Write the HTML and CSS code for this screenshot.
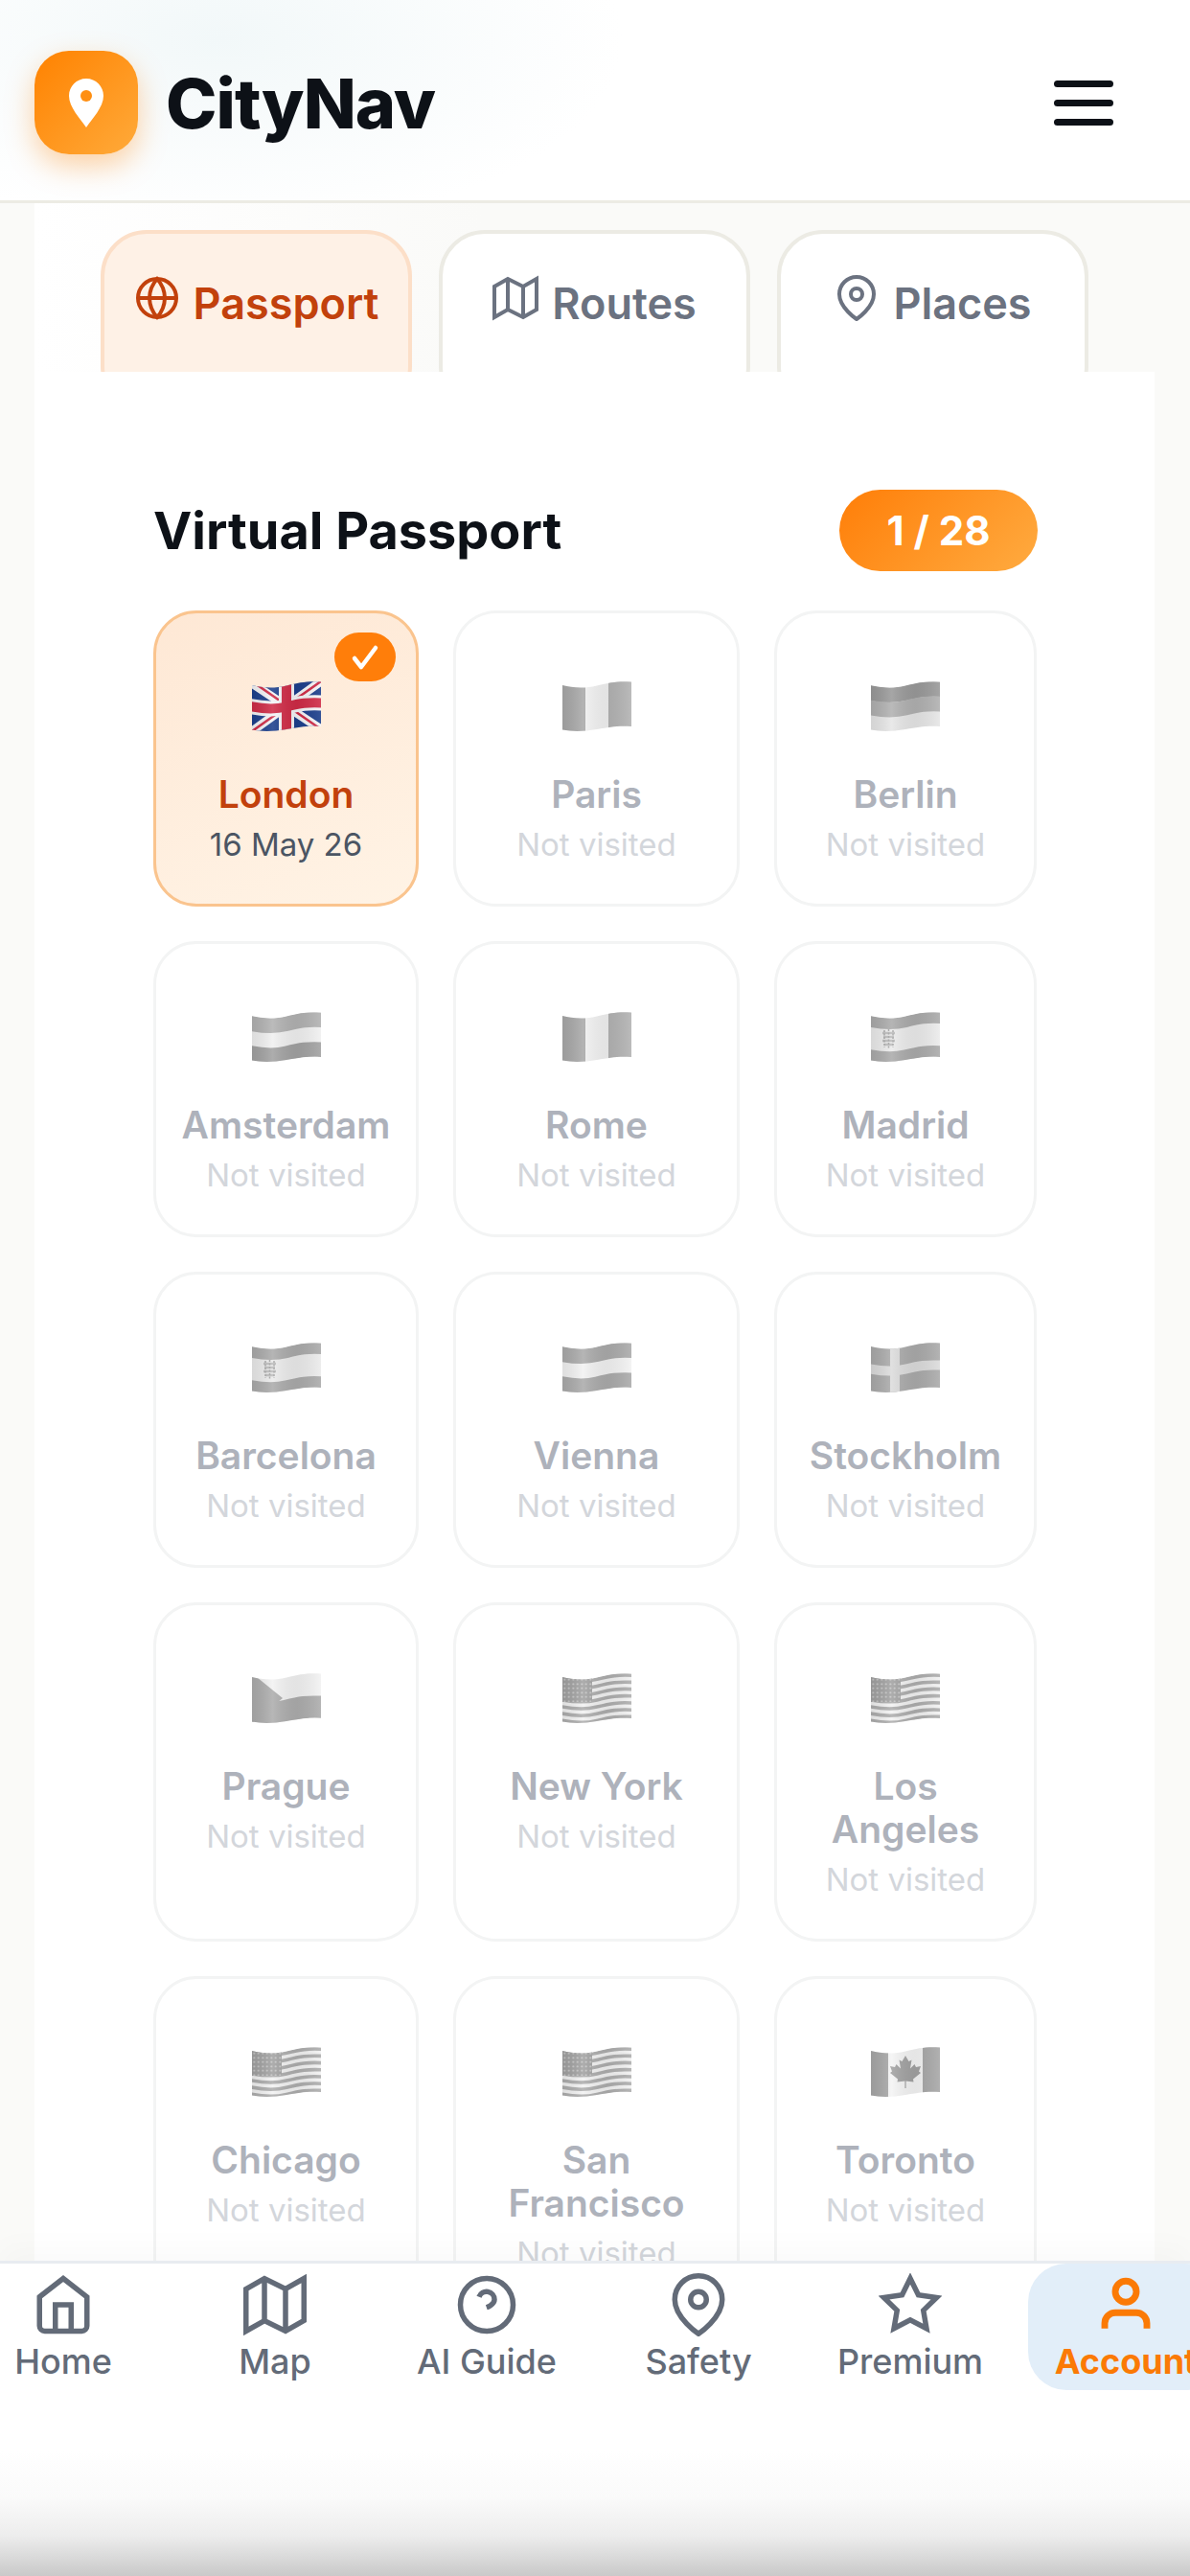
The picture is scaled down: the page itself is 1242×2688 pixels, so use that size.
FILE: index.html
```html
<!DOCTYPE html>
<html lang="en">

<head>
    <meta charset="UTF-8">
    <meta name="viewport" content="width=device-width, initial-scale=1.0">
    <title>CityNav - Virtual Passport</title>
    <link rel="stylesheet" href="styles.css">
</head>

<body>
    <!-- flags, all 72x52 with the same wavy outline -->
    <svg class="sprites" width="0" height="0" aria-hidden="true">
        <defs>
            <clipPath id="flag-shape">
                <path d="M0 4C10 6.500 22 8 36 4.500S58-.5 72 .5V47C58 46 50 47.500 36 50S10 52.500 0 50.500Z" />
            </clipPath>
            <path id="wave" fill="none" d="M-2 4C10 6.500 22 8 36 4.500S58-.5 74 .5" />
            <linearGradient id="fold" x1="0" x2="1" y1="0" y2="0">
                <stop offset="0" stop-color="#000" stop-opacity=".08" />
                <stop offset=".3" stop-color="#fff" stop-opacity=".12" />
                <stop offset=".65" stop-color="#000" stop-opacity=".06" />
                <stop offset="1" stop-color="#fff" stop-opacity=".1" />
            </linearGradient>
            <pattern id="stars" width="4.500" height="4.500" patternUnits="userSpaceOnUse">
                <rect width="4.500" height="4.500" fill="#a2a2a2" />
                <circle cx="2.250" cy="2.250" r="1" fill="#d4d4d4" />
            </pattern>
        </defs>

        <symbol id="flag-uk" viewBox="0 0 72 52">
            <g clip-path="url(#flag-shape)">
                <rect width="72" height="52" fill="#1c3f8c" />
                <path d="M0 2 72 50M72 0 0 52" stroke="#f4f4f6" stroke-width="9" />
                <path d="M0 0 36 25M72 50 36 25" stroke="#cf2b46" stroke-width="2.600" />
                <path d="M72 0 38 24M0 52 34 28" stroke="#cf2b46" stroke-width="2.600" />
                <rect x="28" width="16" height="52" fill="#f4f4f6" />
                <use href="#wave" y="22" stroke="#f4f4f6" stroke-width="16" />
                <rect x="31" width="10" height="52" fill="#cf2b46" />
                <use href="#wave" y="22" stroke="#cf2b46" stroke-width="10" />
                <rect width="72" height="52" fill="url(#fold)" />
            </g>
        </symbol>

        <symbol id="flag-fr" viewBox="0 0 72 52">
            <g clip-path="url(#flag-shape)">
                <rect width="24" height="52" fill="#a9a9a9" />
                <rect x="24" width="24" height="52" fill="#f2f2f2" />
                <rect x="48" width="24" height="52" fill="#b3b3b3" />
                <rect width="72" height="52" fill="url(#fold)" />
            </g>
        </symbol>

        <symbol id="flag-de" viewBox="0 0 72 52">
            <g clip-path="url(#flag-shape)">
                <rect width="72" height="52" fill="#e6e6e6" />
                <use href="#wave" y="7.800" stroke="#9a9a9a" stroke-width="15.600" />
                <use href="#wave" y="23.200" stroke="#b1b1b1" stroke-width="15.600" />
                <rect width="72" height="52" fill="url(#fold)" />
            </g>
        </symbol>

        <symbol id="flag-nl" viewBox="0 0 72 52">
            <g clip-path="url(#flag-shape)">
                <rect width="72" height="52" fill="#f0f0f0" />
                <use href="#wave" y="7.800" stroke="#b2b2b2" stroke-width="15.600" />
                <use href="#wave" y="38.800" stroke="#a2a2a2" stroke-width="15.600" />
                <rect width="72" height="52" fill="url(#fold)" />
            </g>
        </symbol>

        <symbol id="flag-es" viewBox="0 0 72 52">
            <g clip-path="url(#flag-shape)">
                <rect width="72" height="52" fill="#ebebeb" />
                <use href="#wave" y="5.800" stroke="#ababab" stroke-width="11.600" />
                <use href="#wave" y="40.700" stroke="#ababab" stroke-width="11.600" />
                <path d="M12 22h13M13 26h11M12 30h13M14 34h9" stroke="#bdbdbd" stroke-width="2.500" />
                <path d="M14 19v18M18.500 18v20M23 19v18" stroke="#a6a6a6" stroke-width="1.500" stroke-dasharray="2 1.500" />
                <rect width="72" height="52" fill="url(#fold)" />
            </g>
        </symbol>

        <symbol id="flag-at" viewBox="0 0 72 52">
            <g clip-path="url(#flag-shape)">
                <rect width="72" height="52" fill="#f2f2f2" />
                <use href="#wave" y="7.800" stroke="#ababab" stroke-width="15.600" />
                <use href="#wave" y="38.800" stroke="#ababab" stroke-width="15.600" />
                <rect width="72" height="52" fill="url(#fold)" />
            </g>
        </symbol>

        <symbol id="flag-se" viewBox="0 0 72 52">
            <g clip-path="url(#flag-shape)">
                <rect width="72" height="52" fill="#ababab" />
                <rect x="20" width="10" height="52" fill="#dcdcdc" />
                <use href="#wave" y="23.200" stroke="#dcdcdc" stroke-width="10" />
                <rect width="72" height="52" fill="url(#fold)" />
            </g>
        </symbol>

        <symbol id="flag-cz" viewBox="0 0 72 52">
            <g clip-path="url(#flag-shape)">
                <rect width="72" height="52" fill="#f2f2f2" />
                <use href="#wave" y="34.800" stroke="#adadad" stroke-width="23.200" />
                <path d="M0 0 32 26 0 52Z" fill="#adadad" />
                <rect width="72" height="52" fill="url(#fold)" />
            </g>
        </symbol>

        <symbol id="flag-us" viewBox="0 0 72 52">
            <g clip-path="url(#flag-shape)">
                <rect width="72" height="52" fill="#f2f2f2" />
                <use href="#wave" y="1.800" stroke="#aeaeae" stroke-width="3.600" />
                <use href="#wave" y="9" stroke="#aeaeae" stroke-width="3.600" />
                <use href="#wave" y="16.200" stroke="#aeaeae" stroke-width="3.600" />
                <use href="#wave" y="23.400" stroke="#aeaeae" stroke-width="3.600" />
                <use href="#wave" y="30.600" stroke="#aeaeae" stroke-width="3.600" />
                <use href="#wave" y="37.800" stroke="#aeaeae" stroke-width="3.600" />
                <use href="#wave" y="45" stroke="#aeaeae" stroke-width="3.600" />
                <rect width="31" height="30" fill="url(#stars)" />
                <rect width="72" height="52" fill="url(#fold)" />
            </g>
        </symbol>

        <symbol id="flag-ca" viewBox="0 0 72 52">
            <g clip-path="url(#flag-shape)">
                <rect width="72" height="52" fill="#f4f4f4" />
                <rect width="18" height="52" fill="#a8a8a8" />
                <rect x="54" width="18" height="52" fill="#a8a8a8" />
                <path d="M36 9l3.500 6 3-1.500-1.500 9 4.500-4.500 1.500 3 5-1-2 5.500 2 1.500-8 6.500.5 3-8.500-1-8.500 1 .5-3-8-6.500 2-1.500-2-5.500 5 1 1.500-3 4.500 4.500-1.500-9 3 1.500Z" fill="#a2a2a2" />
                <path d="M36 32v11" stroke="#a2a2a2" stroke-width="1.200" />
                <rect width="72" height="52" fill="url(#fold)" />
            </g>
        </symbol>
    </svg>

    <div class="app">
        <header class="topbar">
            <div class="brand">
                <span class="brand-logo">
                    <svg width="36" height="51" viewBox="0 0 36 51">
                        <path fill="#fff" d="M18 0C28 0 36 8 36 18 36 30 24 42 18 51 12 42 0 30 0 18 0 8 8 0 18 0Z" />
                        <circle cx="18" cy="18" r="6" fill="#ff8f12" />
                    </svg>
                </span>
                <span class="brand-name">CityNav</span>
            </div>
            <div class="burger"><span></span><span></span><span></span></div>
        </header>

        <main class="content">
            <div class="tabs">
                <div class="tab tab-active">
                    <svg class="tab-icon" viewBox="0 0 24 24">
                        <circle cx="12" cy="12" r="10" />
                        <path d="M2 12h20M12 2a15.300 15.300 0 0 1 4 10 15.300 15.300 0 0 1-4 10 15.300 15.300 0 0 1-4-10 15.300 15.300 0 0 1 4-10z" />
                    </svg>
                    <span>Passport</span>
                </div>
                <div class="tab">
                    <svg class="tab-icon" viewBox="0 0 24 24">
                        <path d="M1 6v16l7-4 8 4 7-4V2l-7 4-8-4-7 4zM8 2v16M16 6v16" />
                    </svg>
                    <span>Routes</span>
                </div>
                <div class="tab">
                    <svg class="tab-icon" viewBox="0 0 24 24">
                        <path d="M21 10c0 7-9 13-9 13s-9-6-9-13a9 9 0 0 1 18 0z" />
                        <circle cx="12" cy="10" r="3" />
                    </svg>
                    <span>Places</span>
                </div>
            </div>

            <section class="panel">
                <div class="panel-head">
                    <h1>Virtual Passport</h1>
                    <span class="count">1 / 28</span>
                </div>

                <div class="cities">
                    <div class="city city-visited">
                        <span class="check">
                            <svg width="64" height="51" viewBox="0 0 64 51">
                                <path d="M21 27l7 9 15-20" />
                            </svg>
                        </span>
                        <svg class="flag"><use href="#flag-uk" /></svg>
                        <div class="city-name">London</div>
                        <div class="city-date">16 May 26</div>
                    </div>
                    <div class="city">
                        <svg class="flag"><use href="#flag-fr" /></svg>
                        <div class="city-name">Paris</div>
                        <div class="city-date">Not visited</div>
                    </div>
                    <div class="city">
                        <svg class="flag"><use href="#flag-de" /></svg>
                        <div class="city-name">Berlin</div>
                        <div class="city-date">Not visited</div>
                    </div>
                    <div class="city">
                        <svg class="flag"><use href="#flag-nl" /></svg>
                        <div class="city-name">Amsterdam</div>
                        <div class="city-date">Not visited</div>
                    </div>
                    <div class="city">
                        <svg class="flag"><use href="#flag-fr" /></svg>
                        <div class="city-name">Rome</div>
                        <div class="city-date">Not visited</div>
                    </div>
                    <div class="city">
                        <svg class="flag"><use href="#flag-es" /></svg>
                        <div class="city-name">Madrid</div>
                        <div class="city-date">Not visited</div>
                    </div>
                    <div class="city">
                        <svg class="flag"><use href="#flag-es" /></svg>
                        <div class="city-name">Barcelona</div>
                        <div class="city-date">Not visited</div>
                    </div>
                    <div class="city">
                        <svg class="flag"><use href="#flag-at" /></svg>
                        <div class="city-name">Vienna</div>
                        <div class="city-date">Not visited</div>
                    </div>
                    <div class="city">
                        <svg class="flag"><use href="#flag-se" /></svg>
                        <div class="city-name">Stockholm</div>
                        <div class="city-date">Not visited</div>
                    </div>
                    <div class="city">
                        <svg class="flag"><use href="#flag-cz" /></svg>
                        <div class="city-name">Prague</div>
                        <div class="city-date">Not visited</div>
                    </div>
                    <div class="city">
                        <svg class="flag"><use href="#flag-us" /></svg>
                        <div class="city-name">New York</div>
                        <div class="city-date">Not visited</div>
                    </div>
                    <div class="city">
                        <svg class="flag"><use href="#flag-us" /></svg>
                        <div class="city-name">Los<br>Angeles</div>
                        <div class="city-date">Not visited</div>
                    </div>
                    <div class="city">
                        <svg class="flag"><use href="#flag-us" /></svg>
                        <div class="city-name">Chicago</div>
                        <div class="city-date">Not visited</div>
                    </div>
                    <div class="city">
                        <svg class="flag"><use href="#flag-us" /></svg>
                        <div class="city-name">San<br>Francisco</div>
                        <div class="city-date">Not visited</div>
                    </div>
                    <div class="city">
                        <svg class="flag"><use href="#flag-ca" /></svg>
                        <div class="city-name">Toronto</div>
                        <div class="city-date">Not visited</div>
                    </div>
                </div>
            </section>
        </main>

        <nav class="bottom-nav">
            <div class="nav-row">
                <div class="nav-item">
                    <svg class="nav-icon" viewBox="0 0 24 24">
                        <path d="M3 9l9-7 9 7v11a2 2 0 0 1-2 2H5a2 2 0 0 1-2-2z" />
                        <path d="M9 22V12h6v10" />
                    </svg>
                    <span>Home</span>
                </div>
                <div class="nav-item">
                    <svg class="nav-icon" viewBox="0 0 24 24">
                        <path d="M1 6v16l7-4 8 4 7-4V2l-7 4-8-4-7 4zM8 2v16M16 6v16" />
                    </svg>
                    <span>Map</span>
                </div>
                <div class="nav-item">
                    <svg class="nav-icon" viewBox="0 0 24 24">
                        <circle cx="12" cy="12" r="10" />
                        <path d="M9.090 9a3 3 0 0 1 5.830 1c0 2-3 3-3 3" />
                    </svg>
                    <span>AI Guide</span>
                </div>
                <div class="nav-item">
                    <svg class="nav-icon" viewBox="0 0 24 24">
                        <path d="M21 10c0 7-9 13-9 13s-9-6-9-13a9 9 0 0 1 18 0z" />
                        <circle cx="12" cy="10" r="3" />
                    </svg>
                    <span>Safety</span>
                </div>
                <div class="nav-item">
                    <svg class="nav-icon" viewBox="0 0 24 24">
                        <path d="M12 2l3.090 6.260L22 9.270l-5 4.870 1.180 6.880L12 17.770l-6.180 3.250L7 14.140 2 9.270l6.910-1.010L12 2z" />
                    </svg>
                    <span>Premium</span>
                </div>
                <div class="nav-item nav-item-active">
                    <svg class="nav-icon" viewBox="0 0 24 24">
                        <path d="M20 21v-2a4 4 0 0 0-4-4H8a4 4 0 0 0-4 4v2" />
                        <circle cx="12" cy="7" r="4" />
                    </svg>
                    <span>Account</span>
                </div>
            </div>
        </nav>
    </div>
</body>

</html>
```

FILE: styles.css
```css
* {
    box-sizing: border-box;
}

html,
body {
    margin: 0;
    padding: 0;
}

body {
    font-family: Inter, "Liberation Sans", sans-serif;
    background-color: #fafaf8;
}

.sprites {
    position: absolute;
}

.app {
    width: 1242px;
    height: 2688px;
    display: flex;
    flex-direction: column;
    overflow: hidden;
}

/* top bar */

.topbar {
    height: 212px;
    flex: none;
    display: flex;
    align-items: center;
    justify-content: space-between;
    padding: 5px 80px 0 36px;
    border-bottom: 3px solid #ecebe4;
    background: radial-gradient(ellipse 420px 200px at 230px 40px, #f2f8f9, #fff);
}

.brand {
    display: flex;
    align-items: center;
    gap: 29px;
}

.brand-logo {
    width: 108px;
    height: 108px;
    display: flex;
    align-items: center;
    justify-content: center;
    border-radius: 36px;
    background: linear-gradient(135deg, #ff8200, #ffaa3a);
    box-shadow: 0 12px 30px rgba(255, 130, 0, 0.35);
}

.brand-name {
    font-size: 72px;
    font-weight: 800;
    letter-spacing: -1px;
    color: #0d1117;
}

.burger {
    width: 62px;
    display: flex;
    flex-direction: column;
    gap: 13px;
}

.burger span {
    height: 7px;
    border-radius: 4px;
    background-color: #0d1117;
}

/* tabs + panel */

.content {
    flex: 1;
    min-height: 0;
    overflow: hidden;
    padding: 0 37px 0 36px;
}

.tabs {
    height: 176px;
    padding: 28px 68px 0 69px;
    display: flex;
    gap: 28px;
    overflow: hidden;
    background: linear-gradient(90deg, #fff, #fafaf8 40%);
}

.tab {
    width: 325px;
    height: 190px;
    flex: none;
    display: flex;
    justify-content: center;
    gap: 14px;
    padding-top: 43px;
    border: 4px solid #ecebe4;
    border-radius: 48px;
    background-color: #fff;
    color: #6b7280;
    font-size: 45px;
    font-weight: 600;
}

.tab span {
    line-height: 50px;
    margin-top: 5px;
}

.tab-active {
    border-color: #fcdfc8;
    background-color: #fef1e6;
    color: #c2410c;
}

.tab-icon {
    width: 48px;
    height: 48px;
    flex: none;
    fill: none;
    stroke: currentColor;
    stroke-width: 2;
}

.panel {
    padding: 123px 122px 0 124px;
    background-color: #fff;
}

.panel-head {
    display: flex;
    align-items: center;
    justify-content: space-between;
    margin-bottom: 41px;
}

.panel-head h1 {
    margin: 0;
    font-size: 54px;
    font-weight: 700;
    color: #0d1117;
}

.count {
    width: 207px;
    height: 85px;
    display: flex;
    align-items: center;
    justify-content: center;
    border-radius: 43px;
    background: linear-gradient(135deg, #ff7e08, #ffab40);
    color: #fff;
    font-size: 42px;
    font-weight: 700;
}

.cities {
    display: grid;
    grid-template-columns: 277px 299px 274px;
    gap: 36px;
}

.city {
    position: relative;
    display: flex;
    flex-direction: column;
    align-items: center;
    padding: 71px 6px 42px;
    border: 3px solid #f3f4f4;
    border-radius: 45px;
    background-color: #fff;
    text-align: center;
}

.flag {
    width: 72px;
    height: 52px;
    flex: none;
}

.city-name {
    margin-top: 43px;
    font-size: 39px;
    line-height: 45px;
    font-weight: 600;
    color: #aeb2bb;
}

.city-date {
    margin-top: 10px;
    font-size: 33px;
    line-height: 40px;
    color: #d3d6db;
}

.city-visited {
    border-color: #fac48e;
    background: linear-gradient(160deg, #fee8d5, #fff3e5);
}

.city-visited .city-name {
    color: #c2410c;
}

.city-visited .city-date {
    color: #4b5563;
}

.check {
    position: absolute;
    top: 20px;
    right: 21px;
    width: 64px;
    height: 51px;
    border-radius: 26px;
    background-color: #ff7e0a;
}

.check svg {
    display: block;
    fill: none;
    stroke: #fff;
    stroke-width: 4.5;
    stroke-linecap: round;
    stroke-linejoin: round;
}

/* bottom nav */

.bottom-nav {
    height: 329px;
    flex: none;
    position: relative;
    border-top: 3px solid #e8ecf1;
    background: linear-gradient(to bottom, #fff 60%, #fafafa 75%, #ededed 87%, #c9c9c9);
    box-shadow: 0 -14px 30px rgba(0, 0, 0, 0.025);
}

.nav-row {
    display: flex;
    gap: 17px;
    margin-left: -36px;
}

.nav-item {
    width: 204px;
    height: 132px;
    flex: none;
    display: flex;
    flex-direction: column;
    align-items: center;
    padding-top: 10px;
    color: #636b78;
    font-size: 36px;
    font-weight: 500;
    line-height: 44px;
}

.nav-icon {
    width: 66px;
    height: 66px;
    margin-bottom: 4px;
    fill: none;
    stroke: currentColor;
    stroke-width: 2;
}

.nav-item-active {
    margin-left: 4px;
    border-radius: 40px;
    background-color: #e2eef9;
    color: #fb7a05;
    font-weight: 700;
}

.nav-item-active .nav-icon {
    stroke-width: 2.5;
}
```
